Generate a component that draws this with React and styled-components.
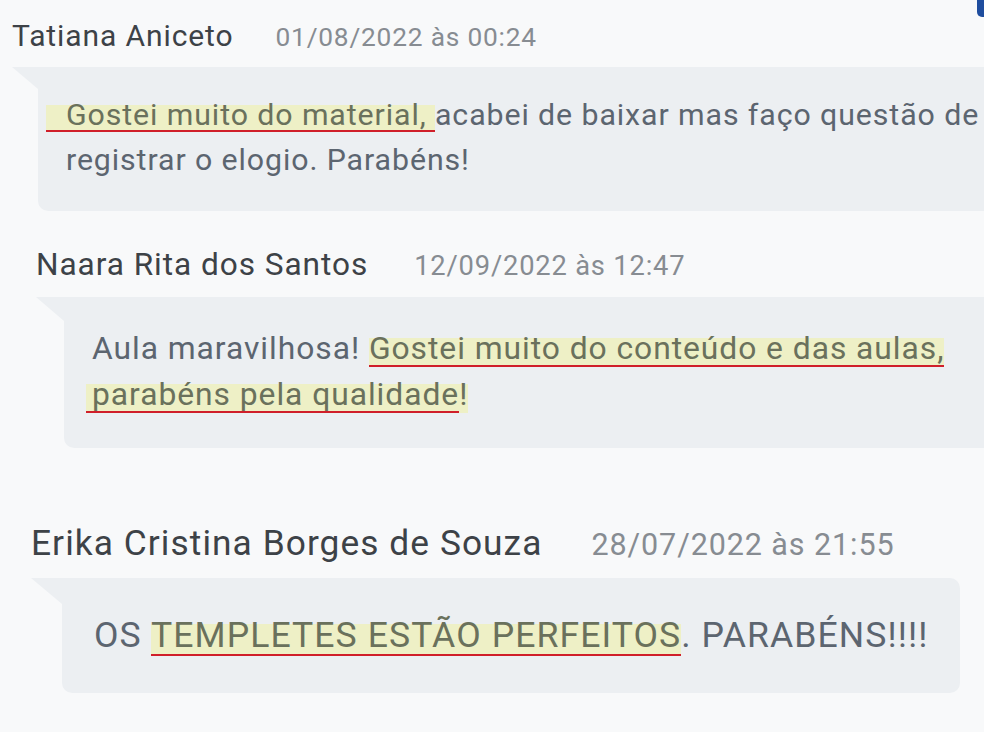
import styled, { createGlobalStyle } from "styled-components";

const GlobalStyle = createGlobalStyle`
  html, body {
    margin: 0;
    padding: 0;
    background: #f8f9fa;
    overflow: hidden;
  }
  body {
    font-family: Roboto, "Liberation Sans", sans-serif;
    -webkit-font-smoothing: antialiased;
  }
`;

const Page = styled.div`
  position: relative;
  width: 984px;
  height: 732px;
  overflow: hidden;
  display: flex;
  flex-direction: column;
`;

const Corner = styled.div`
  position: absolute;
  top: 0;
  right: 0;
  width: 7px;
  height: 17px;
  background: #1f4d9e;
  border-bottom-left-radius: 5px;
`;

const Comment = styled.div`
  display: flex;
  flex-direction: column;
  gap: 14px;
  margin-top: ${({ $top }) => $top}px;
  padding-left: ${({ $indent }) => $indent}px;
`;

const Header = styled.div`
  display: flex;
  align-items: baseline;
  gap: ${({ $gap }) => $gap}px;
  line-height: normal;
`;

const Name = styled.span`
  font-size: ${({ $size }) => $size}px;
  letter-spacing: 0.03em;
  color: #3d4247;
  white-space: nowrap;
`;

const DateText = styled.span`
  font-size: ${({ $size }) => $size}px;
  letter-spacing: 0.03em;
  color: #878c92;
  white-space: nowrap;
`;

const Bubble = styled.div`
  position: relative;
  margin-left: ${({ $tail }) => $tail}px;
  width: ${({ $width }) => $width}px;
  box-sizing: border-box;
  padding: ${({ $pad }) => $pad};
  background: #eceff2;
  border-radius: 0 10px 10px 10px;
  font-size: ${({ $size }) => $size}px;
  line-height: ${({ $lh }) => $lh}px;
  letter-spacing: 0.03em;
  color: #5c6570;
  white-space: nowrap;

  &::before {
    content: "";
    position: absolute;
    top: 0;
    left: -${({ $tail }) => $tail}px;
    width: ${({ $tail }) => $tail}px;
    height: ${({ $tail }) => Math.round($tail * 0.85)}px;
    background: #eceff2;
    clip-path: polygon(0 0, 100% 0, 100% 100%);
  }
`;

const Mark = styled.span`
  color: #6a715c;
  margin-left: ${({ $pull }) => ($pull ? -$pull : 0)}px;
  padding-left: ${({ $lead, $pull }) => ($lead || 0) + ($pull || 0)}px;
  background: ${({ $plain }) =>
    $plain
      ? "linear-gradient(to bottom, transparent 0 0.28em, #eef0c6 0.28em 100%)"
      : "linear-gradient(to bottom, transparent 0 0.28em, #eef0c6 0.28em calc(100% - 2px), #d01f2a calc(100% - 2px))"};
`;

const Lead = styled.span`
  padding-left: ${({ $lead }) => $lead}px;
`;

const comments = [
  {
    name: "Tatiana Aniceto",
    date: "01/08/2022 às 00:24",
    indent: 12,
    top: 18,
    gap: 42,
    tail: 26,
    nameSize: 30,
    dateSize: 26.3,
    textSize: 30.3,
    lineHeight: 45,
    bubbleWidth: 990,
    pad: "25px 0 29px 8px",
    body: (
      <>
        <Mark $lead={20}>Gostei muito do material, </Mark>acabei de baixar mas faço questão de
        <br />
        <Lead $lead={20}>registrar o elogio. Parabéns!</Lead>
      </>
    ),
  },
  {
    name: "Naara Rita dos Santos",
    date: "12/09/2022 às 12:47",
    indent: 36,
    top: 35,
    gap: 46,
    tail: 28,
    nameSize: 31.6,
    dateSize: 27.3,
    textSize: 31.8,
    lineHeight: 46,
    bubbleWidth: 990,
    pad: "28px 0 31px 28px",
    body: (
      <>
        Aula maravilhosa! <Mark>Gostei muito do conteúdo e das aulas,</Mark>
        <br />
        <Mark $pull={6}>parabéns pela qualidade</Mark>
        <Mark $plain>!</Mark>
      </>
    ),
  },
  {
    name: "Erika Cristina Borges de Souza",
    date: "28/07/2022 às 21:55",
    indent: 31,
    top: 74,
    gap: 49,
    tail: 31,
    nameSize: 35.3,
    dateSize: 30.5,
    textSize: 35.6,
    lineHeight: 48,
    bubbleWidth: 898,
    pad: "33px 0 34px 32px",
    body: (
      <>
        OS <Mark>TEMPLETES ESTÃO PERFEITOS</Mark>. PARABÉNS!!!!
      </>
    ),
  },
];

function App() {
  return (
    <>
      <GlobalStyle />
      <Page>
        <Corner />
        {comments.map((c) => (
          <Comment key={c.name} $indent={c.indent} $top={c.top}>
            <Header $gap={c.gap}>
              <Name $size={c.nameSize}>{c.name}</Name>
              <DateText $size={c.dateSize}>{c.date}</DateText>
            </Header>
            <Bubble
              $tail={c.tail}
              $width={c.bubbleWidth}
              $pad={c.pad}
              $size={c.textSize}
              $lh={c.lineHeight}
            >
              {c.body}
            </Bubble>
          </Comment>
        ))}
      </Page>
    </>
  );
}

export default App;
